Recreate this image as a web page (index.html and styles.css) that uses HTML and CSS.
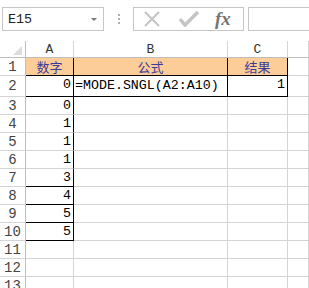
FILE: index.html
```html
<!DOCTYPE html>
<html lang="zh-CN">
<head>
<meta charset="UTF-8">
<title>MODE.SNGL</title>
<link rel="stylesheet" href="styles.css">
</head>
<body>

<div class="toolbar">
  <div class="name-box">
    <span>E15</span>
    <span class="arrow"></span>
  </div>
  <div class="grip"><i></i><i></i><i></i></div>
  <div class="fx-buttons">
    <svg class="icon" width="18" height="16" viewBox="0 0 18 16">
      <path d="M2 1 L16 15 M16 1 L2 15" stroke="#c4c4c4" stroke-width="2" fill="none"/>
    </svg>
    <svg class="icon" width="20" height="16" viewBox="0 0 20 16">
      <path d="M1 8 L6 14 L19 1" stroke="#c4c4c4" stroke-width="3.5" fill="none"/>
    </svg>
    <span class="fx">fx</span>
  </div>
  <div class="formula-box"></div>
</div>

<div class="sheet">
  <div class="corner"><span class="tri"></span></div>
  <div class="col-head">A</div>
  <div class="col-head">B</div>
  <div class="col-head">C</div>
  <div class="col-head"></div>

  <div class="row-head">1</div>
  <div class="cell head-cell black-r black-b">数字</div>
  <div class="cell head-cell black-r black-b">公式</div>
  <div class="cell head-cell black-r black-b">结果</div>
  <div class="cell"></div>

  <div class="row-head tall">2</div>
  <div class="cell num black-r black-b">0</div>
  <div class="cell text black-r black-b">=MODE.SNGL(A2:A10)</div>
  <div class="cell num black-r black-b">1</div>
  <div class="cell"></div>

  <div class="row-head">3</div>
  <div class="cell num black-r">0</div>
  <div class="cell"></div><div class="cell"></div><div class="cell"></div>

  <div class="row-head">4</div>
  <div class="cell num black-r">1</div>
  <div class="cell"></div><div class="cell"></div><div class="cell"></div>

  <div class="row-head">5</div>
  <div class="cell num black-r">1</div>
  <div class="cell"></div><div class="cell"></div><div class="cell"></div>

  <div class="row-head">6</div>
  <div class="cell num black-r">1</div>
  <div class="cell"></div><div class="cell"></div><div class="cell"></div>

  <div class="row-head">7</div>
  <div class="cell num black-r black-b">3</div>
  <div class="cell"></div><div class="cell"></div><div class="cell"></div>

  <div class="row-head">8</div>
  <div class="cell num black-r black-b">4</div>
  <div class="cell"></div><div class="cell"></div><div class="cell"></div>

  <div class="row-head">9</div>
  <div class="cell num black-r black-b">5</div>
  <div class="cell"></div><div class="cell"></div><div class="cell"></div>

  <div class="row-head">10</div>
  <div class="cell num black-r black-b">5</div>
  <div class="cell"></div><div class="cell"></div><div class="cell"></div>

  <div class="row-head">11</div>
  <div class="cell"></div><div class="cell"></div><div class="cell"></div><div class="cell"></div>

  <div class="row-head">12</div>
  <div class="cell"></div><div class="cell"></div><div class="cell"></div><div class="cell"></div>

  <div class="row-head">13</div>
  <div class="cell"></div><div class="cell"></div><div class="cell"></div><div class="cell"></div>
</div>

</body>
</html>
```

FILE: styles.css
```css
body {
  margin: 0;
  padding: 0;
  background-color: #fff;
  font-family: "Liberation Mono", monospace;
  width: 309px;
  height: 288px;
  overflow: hidden;
}

/* formula bar */
.toolbar {
  display: flex;
  align-items: center;
  padding: 7px 0 0 2px;
  height: 24px;
}

.name-box {
  box-sizing: border-box;
  width: 102px;
  height: 24px;
  border: 1px solid #c6c6c6;
  display: flex;
  align-items: center;
  justify-content: space-between;
  padding: 0 6px 0 5px;
  font-size: 13.3px;
  color: #222;
}

.arrow {
  width: 0;
  height: 0;
  border-left: 3px solid transparent;
  border-right: 3px solid transparent;
  border-top: 3px solid #777;
}

.grip {
  width: 29px;
  display: flex;
  flex-direction: column;
  align-items: center;
  gap: 2px;
}

.grip i {
  width: 2px;
  height: 2px;
  background-color: #b0b0b0;
}

.fx-buttons {
  box-sizing: border-box;
  width: 111px;
  height: 24px;
  border: 1px solid #c6c6c6;
  display: flex;
  align-items: center;
  padding-left: 9px;
  gap: 18px;
}

.fx {
  font-family: "Liberation Serif", serif;
  font-style: italic;
  font-weight: bold;
  font-size: 19px;
  color: #757575;
  margin-left: -2px;
}

.formula-box {
  box-sizing: border-box;
  flex: 1;
  height: 24px;
  margin-left: 4px;
  border: 1px solid #c6c6c6;
  border-right: none;
}

/* grid */
.sheet {
  display: grid;
  grid-template-columns: 26px 48px 154px 60px 1fr;
  grid-template-rows: 17px 18px 21px repeat(11, 18px);
  margin-top: 10px;
}

.corner,
.col-head,
.row-head,
.cell {
  box-sizing: border-box;
  border-right: 1px solid #d4d4d4;
  border-bottom: 1px solid #d4d4d4;
}

.corner {
  position: relative;
  border-right-color: #bdbdbd;
  border-bottom-color: #bdbdbd;
}

.tri {
  position: absolute;
  right: 3px;
  bottom: 2px;
  width: 0;
  height: 0;
  border-left: 9px solid transparent;
  border-bottom: 9px solid #dcdcdc;
}

.col-head {
  text-align: center;
  font-size: 13px;
  line-height: 17px;
  color: #333;
  border-bottom-color: #bdbdbd;
}

.row-head {
  text-align: center;
  font-size: 14px;
  line-height: 18px;
  color: #444;
  border-right-color: #bdbdbd;
}

.row-head.tall {
  line-height: 21px;
}

.cell {
  font-size: 13.3px;
  line-height: 18px;
  color: #000;
  white-space: nowrap;
}

.head-cell {
  background-color: #fdcd99;
  text-align: center;
  color: #3b3b98;
  font-family: "Noto Sans CJK SC", sans-serif;
  font-size: 13px;
  line-height: 17px;
}

.num {
  text-align: right;
  padding-right: 2px;
}

.text {
  padding-left: 1px;
  line-height: 20px;
}

.black-r {
  border-right-color: #000;
}

.black-b {
  border-bottom-color: #000;
}
```
